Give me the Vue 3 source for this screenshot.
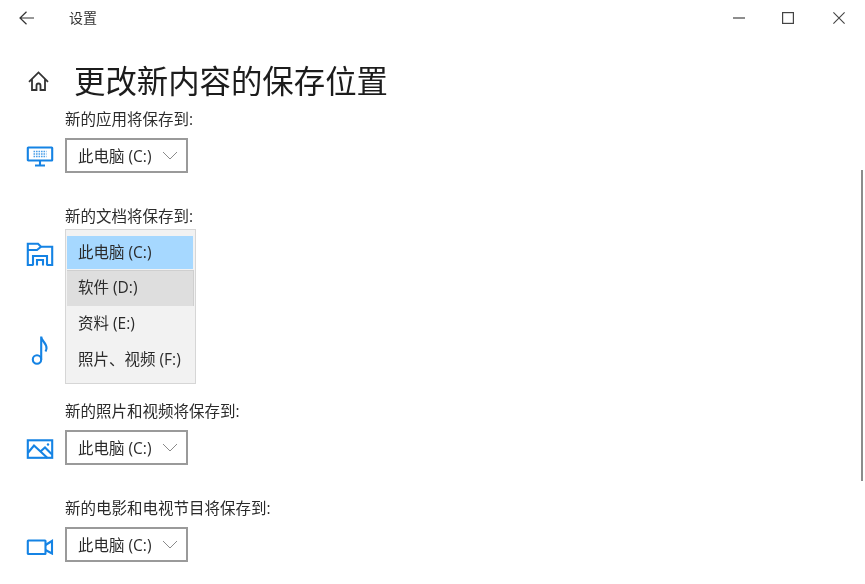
<template>
  <div class="settings-window">
    <!-- Title bar -->
    <div class="title-bar">
      <button class="back-btn" aria-label="返回">
        <svg width="16" height="14" viewBox="0 0 16 14" fill="none" stroke="currentColor" stroke-width="1.2">
          <path d="M1 7h14M7.5 .8 1 7l6.500 6.200" />
        </svg>
      </button>
      <span class="window-title">设置</span>
      <div class="window-controls">
        <button class="win-btn" aria-label="最小化">
          <svg width="12" height="12" viewBox="0 0 12 12" stroke="currentColor" stroke-width="1.2"><path d="M0 6h12" /></svg>
        </button>
        <button class="win-btn" aria-label="最大化">
          <svg width="12" height="12" viewBox="0 0 12 12" fill="none" stroke="currentColor" stroke-width="1.2"><rect x=".6" y=".6" width="10.8" height="10.8" /></svg>
        </button>
        <button class="win-btn" aria-label="关闭">
          <svg width="12" height="12" viewBox="0 0 12 12" stroke="currentColor" stroke-width="1.1"><path d="M.4 .4l11.200 11.200M11.600 .4.4 11.600" /></svg>
        </button>
      </div>
    </div>

    <!-- Page header -->
    <div class="page-header">
      <svg class="home-icon" width="22" height="20" viewBox="0 0 22 20" fill="none" stroke="currentColor" stroke-width="1.800">
        <path d="M1 10.800 10.500 1.400l9.500 9.400M4 8v11h4.500v-4.500a2 2 0 0 1 4 0V19H17V8" />
      </svg>
      <h1>更改新内容的保存位置</h1>
    </div>

    <!-- Save location sections -->
    <div class="sections">
      <div v-for="section in sections" :key="section.icon" class="section">
        <div class="section-label">{{ section.label }}</div>
        <div class="section-row">
          <div class="section-icon">
            <svg v-if="section.icon === 'apps'" width="28" height="22" viewBox="0 0 28 22" fill="none" stroke="#1583e4" stroke-width="2.100">
              <rect x="1.800" y="2.500" width="24.400" height="13" rx=".5" />
              <path d="M14 15.500V20M9 20.500h10" />
              <path d="M7.500 6.500h13M7.500 9h13M7.500 11.500h13" stroke="#4a9fe9" stroke-width="1.600" stroke-dasharray="1.600 .9" />
            </svg>
            <svg v-else-if="section.icon === 'docs'" width="28" height="26" viewBox="0 0 28 26" fill="none" stroke="#1583e4" stroke-width="2.100">
              <path d="M7 25H1.800V3.800H12l3 3h11.200V25H21" />
              <path d="M1.800 10H11l4-3.200" />
              <path d="M7 25.500V16h14v9.500M11 25.500V20h6v5.500" />
            </svg>
            <svg v-else-if="section.icon === 'music'" width="28" height="30" viewBox="0 0 28 30" fill="none" stroke="#1583e4" stroke-width="2.100">
              <circle cx="11" cy="24.500" r="4.200" />
              <path d="M15.200 24.500V1.500c0 4.500 5.800 6.500 5.300 12-.1 1-.5 2-1 3" />
            </svg>
            <svg v-else-if="section.icon === 'photos'" width="28" height="22" viewBox="0 0 28 22" fill="none" stroke="#1583e4" stroke-width="2.100">
              <rect x="1.800" y="3.300" width="24.400" height="17.500" />
              <path d="M1.800 16 8 8.500 21.500 21M15 14l4-3.500 7 7" />
              <circle cx="22" cy="7.500" r="1.200" fill="#1583e4" stroke="none" />
            </svg>
            <svg v-else width="28" height="20" viewBox="0 0 28 20" fill="none" stroke="#1583e4" stroke-width="2.100">
              <rect x="1.800" y="5.500" width="17.700" height="13.500" rx=".5" />
              <path d="M19.500 10 26 6v12.500L19.500 15" />
            </svg>
          </div>
          <div v-if="section.label && !section.open" class="select-box">
            <span>此电脑 (C:)</span>
            <svg width="16" height="9" viewBox="0 0 16 9" fill="none" stroke="currentColor" stroke-width="1"><path d="m1 1 7 7 7-7" /></svg>
          </div>
          <!-- Open dropdown, it hides the select below it and the music section -->
          <ul v-if="section.open" class="drive-menu">
            <li v-for="(drive, i) in drives" :key="drive" :class="{ selected: i === 0, hovered: i === 1 }">{{ drive }}</li>
          </ul>
        </div>
      </div>
    </div>

    <div class="scroll-thumb"></div>
  </div>
</template>

<script setup>
const sections = [
  { label: '新的应用将保存到:', icon: 'apps' },
  { label: '新的文档将保存到:', icon: 'docs', open: true },
  { label: '', icon: 'music' },
  { label: '新的照片和视频将保存到:', icon: 'photos' },
  { label: '新的电影和电视节目将保存到:', icon: 'video' }
]

const drives = ['此电脑 (C:)', '软件 (D:)', '资料 (E:)', '照片、视频 (F:)']
</script>

<style scoped>
.settings-window {
  position: relative;
  width: 865px;
  height: 584px;
  overflow: hidden;
  background: #ffffff;
  color: #1c1c1c;
  font-family: "Open Sans", "Noto Sans CJK SC", sans-serif;
  filter: blur(0.35px);
}

.title-bar {
  display: flex;
  align-items: center;
  height: 36px;
  color: #333333;
}

.back-btn {
  display: flex;
  width: 16px;
  margin-left: 19px;
  padding: 0;
  background: none;
  border: none;
  color: #333333;
}

.window-title {
  margin-left: 34px;
  margin-bottom: 2px;
  font-size: 14px;
}

.window-controls {
  display: flex;
  gap: 38px;
  margin-left: auto;
  margin-right: 20px;
}

.win-btn {
  display: flex;
  padding: 0;
  background: none;
  border: none;
  color: #444444;
}

.win-btn:nth-child(2) {
  margin: 0 1px 0 -1px;
}

.page-header {
  display: flex;
  align-items: center;
  height: 54px;
  margin-top: 18px;
  padding-left: 28px;
}

.home-icon {
  color: #333333;
  margin-right: 24px;
}

h1 {
  margin: 0;
  font-size: 31.400px;
  font-weight: 400;
  line-height: 44px;
  color: #1c1c1c;
}

.sections {
  display: flex;
  flex-direction: column;
  gap: 34px;
  margin-top: 2px;
}

.section {
  display: flex;
  flex-direction: column;
  height: 63px;
}

.section:nth-child(3) {
  height: 64px;
}

.section-label {
  height: 18px;
  margin-left: 65px;
  font-size: 15.500px;
  line-height: 18px;
  white-space: nowrap;
  color: #2b2b2b;
}

.section-row {
  position: relative;
  display: flex;
  align-items: center;
  margin-top: 10px;
  padding-left: 26px;
}

.section-icon {
  display: flex;
  align-items: center;
  width: 28px;
  height: 35px;
  margin-right: 11px;
}

.select-box {
  display: flex;
  align-items: center;
  justify-content: space-between;
  box-sizing: border-box;
  width: 123px;
  height: 35px;
  padding: 0 8px 0 11px;
  border: 2px solid #9a9a9a;
  font-size: 15.500px;
  color: #2b2b2b;
  background: #ffffff;
}

.select-box span {
  margin-top: -1px;
}

.select-box svg {
  color: #8a8a8a;
}

.drive-menu {
  position: absolute;
  top: -6px;
  left: 65px;
  box-sizing: border-box;
  width: 131px;
  height: 155px;
  margin: 0;
  padding: 6px 2px 0 1px;
  list-style: none;
  background: #f2f2f2;
  border: 1px solid #d6d6d6;
  z-index: 2;
  font-size: 15.500px;
  color: #2b2b2b;
}

.drive-menu li {
  height: 36px;
  padding-left: 11px;
  line-height: 34px;
  white-space: nowrap;
}

.drive-menu .selected {
  height: 33px;
  margin-bottom: 1px;
  line-height: 33px;
  background: #a6d8ff;
}

.drive-menu .hovered {
  box-sizing: border-box;
  margin-right: -1px;
  background: #dedede;
  border-top: 1px solid #cfcfcf;
  border-right: 1px solid #cfcfcf;
  line-height: 33px;
}

.scroll-thumb {
  position: absolute;
  top: 170px;
  right: 2px;
  width: 2px;
  height: 311px;
  background: #8c8c8c;
}
</style>
